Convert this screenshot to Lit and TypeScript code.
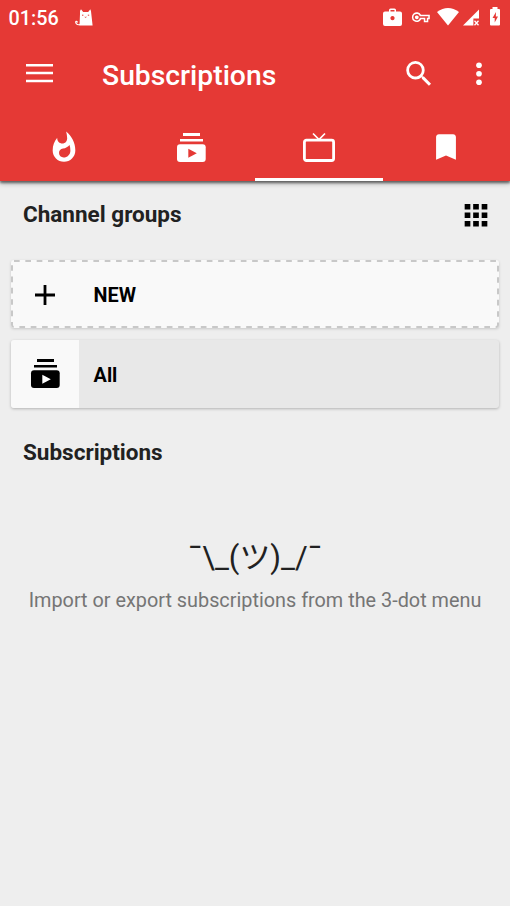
import { LitElement, html, svg, css } from "lit";
import { customElement } from "lit/decorators.js";

const stack = (hole: string) => svg`
  <path d="M6 0h17v3H6zM3 6h23v2.6H3z" fill="currentColor"/>
  <rect x="0" y="11.3" width="28.7" height="17.7" rx="3" fill="currentColor"/>
  <path d="M11.3 15.7v9L19.8 20.2z" fill=${hole}/>`;

@customElement("app-root")
export class AppRoot extends LitElement {
  static styles = css`
    :host { display: block; height: 906px; overflow: hidden; background: #eee; font-family: Roboto, "Noto Sans CJK JP", sans-serif; color: #212121; }
    * { box-sizing: border-box; }
    svg { display: block; flex: none; overflow: visible; }
    .top { background: #e53935; color: #fff; height: 181px; box-shadow: 0 2px 2px rgba(0,0,0,.4), 0 2px 5px rgba(0,0,0,.4); position: relative; }
    .status { height: 34px; display: flex; align-items: center; padding-left: 8.5px; }
    .clock { font-size: 19.8px; font-weight: 500; line-height: 34px; width: 66.5px; padding-top: 3px; white-space: nowrap; }
    .tray { margin-left: auto; }
    .bar { height: 79px; display: flex; align-items: center; padding: 0 14px 0 26px; }
    .title { font-size: 28.3px; font-weight: 500; line-height: 34px; margin: 4px 0 0 49px; flex: 1; white-space: nowrap; }
    .more { margin-left: 26px; }
    .tabs { display: grid; grid-template-columns: repeat(4, 1fr); height: 68px; }
    .tab { display: flex; align-items: center; justify-content: center; }
    .on { border-bottom: 3px solid #fff; padding-top: 3px; }
    .head { display: flex; align-items: center; justify-content: space-between; height: 68px; padding: 0 17px 0 23px; font-size: 22.5px; font-weight: 700; }
    .first span { padding-bottom: 2px; }
    .card { margin: 0 11px; height: 68px; display: flex; align-items: center; border-radius: 3px; box-shadow: 0 1px 3px rgba(0,0,0,.25); font-size: 19.8px; font-weight: 700; color: #000; overflow: hidden; }
    .card span { padding-top: 2px; }
    .new { margin-top: 11px; background: #f9f9f9; position: relative; overflow: visible; box-shadow: 0 1px 3px rgba(0,0,0,.16); }
    .dash { position: absolute; inset: 0; }
    .all { margin-top: 12px; background: #e8e8e8; }
    .icon { width: 68px; height: 68px; display: flex; align-items: center; justify-content: center; background: #f9f9f9; margin-right: 14.6px; }
    .all .icon { padding-bottom: 1px; }
    .new .icon { background: none; padding-top: 1px; }
    .second { margin-top: 10px; }
    .face { text-align: center; font-size: 30.9px; line-height: 46px; margin-top: 49px; white-space: nowrap; }
    .hint { text-align: center; font-size: 19.83px; line-height: 26px; margin-top: 7px; color: #757575; white-space: nowrap; }
  `;

  render() {
    return html`
      <div class="top">
        <div class="status">
          <span class="clock">01:56</span>
          <svg width="18" height="17" viewBox="0 0 18 17">
            <path d="M5 2 6 .2 8.2 3h5L15.3.3l.7 2 1.6 14.2H4.5L5 5z" fill="#fff"/>
            <path d="M5 15.6C1.5 16.5-.2 13 1.2 12.4q1.4-.2.9 1.2" fill="none" stroke="#fff" stroke-width="1.2"/>
            <path d="M7 6.2h1.4M12.8 6.2h1.4M9.8 8q.8.7 1.6 0" stroke="#e53935" fill="none"/>
          </svg>
          <svg class="tray" width="127" height="34" viewBox="383 0 127 34" fill="#fff">
            <path fill-rule="evenodd" d="M385 11.5h4V10q0-1.5 1.5-1.5h4q1.5 0 1.5 1.5v1.5h4q2 0 2 2V24q0 2-2 2h-15q-2 0-2-2V13.5q0-2 2-2zM390.5 11.5h4V10h-4zM392.5 16a2.1 2.1 0 1 0 .01 0z"/>
            <path fill-rule="evenodd" d="M421 14.7h8.8v4.6h-1.5v3h-4.5v-3h-2.6a4.9 4.9 0 1 1-.2-4.6zm-1.2 1.5a3.3 3.3 0 1 0 .1 1.6h5.4v3h1.5v-3h1.5v-1.6zM416.8 15.4a1.9 1.9 0 1 0 .01 0z"/>
            <path d="M437 12q11-8 22 0L448 25.5z"/>
            <path d="M463 25.5 479 9.5v9h-5.6v7z"/>
            <path d="m474.5 20.7 4 4.6m0-4.6-4 4.6" stroke="#fff" stroke-width="1.3"/>
            <path d="M490 10q0-1 1-1h1.5V7h5v2h1.5q1 0 1 1v14.5q0 1-1 1h-8q-1 0-1-1z"/>
            <path d="m496 12-3.500 6h2.200v4.600l3.300-6h-2.200z" fill="#e53935"/>
          </svg>
        </div>
        <div class="bar">
          <svg width="27" height="19" viewBox="0 .5 27 19" fill="#fff"><path d="M0 .5h27v2.5H0zM0 8.3h27v2.5H0zM0 16.2h27v2.5H0z"/></svg>
          <span class="title">Subscriptions</span>
          <svg width="34" height="34" viewBox="0 .2 24 24" fill="#fff"><path d="M15.5 14h-.79l-.28-.27A6.471 6.471 0 0 0 16 9.5 6.5 6.5 0 1 0 9.5 16c1.61 0 3.09-.59 4.23-1.57l.27.28v.79l5 4.99L20.49 19l-4.99-5zm-6 0C7.01 14 5 11.99 5 9.5S7.01 5 9.5 5 14 7.01 14 9.5 11.99 14 9.5 14z"/></svg>
          <svg class="more" width="34" height="34" viewBox="0 .2 24 24" fill="#fff"><circle cx="12" cy="6" r="2"/><circle cx="12" cy="12" r="2"/><circle cx="12" cy="18" r="2"/></svg>
        </div>
        <div class="tabs">
          <div class="tab"><svg width="34" height="34" viewBox="0 -.4 24 24" fill="#fff"><path d="M13.5.67s.74 2.65.74 4.8c0 2.06-1.35 3.73-3.41 3.73-2.07 0-3.63-1.67-3.63-3.73l.03-.36C5.21 7.51 4 10.62 4 14c0 4.42 3.58 8 8 8s8-3.58 8-8C20 8.61 17.41 3.8 13.5.67zM11.71 19c-1.78 0-3.22-1.4-3.22-3.14 0-1.62 1.05-2.76 2.81-3.12 1.77-.36 3.6-1.21 4.62-2.58.39 1.29.59 2.65.59 4.04 0 2.65-2.15 4.8-4.8 4.8z"/></svg></div>
          <div class="tab"><svg width="29" height="29" viewBox="0 0 29 29">${stack("#e53935")}</svg></div>
          <div class="tab on"><svg width="32" height="29" viewBox="0 0 32 29" fill="none" stroke="#fff"><rect x="1.4" y="7.2" width="29.2" height="20.3" rx="2" stroke-width="2.8"/><path d="m10 .5 6 6 6-6" stroke-width="1.7"/></svg></div>
          <div class="tab"><svg width="34" height="34" viewBox="0 0 24 24" fill="#fff"><path d="M17 3H7c-1.1 0-2 .9-2 2v16l7-3 7 3V5c0-1.1-.9-2-2-2z"/></svg></div>
        </div>
      </div>
      <div class="head first"><span>Channel groups</span>
        <svg width="34" height="34" viewBox="0 -.2 24 24"><path d="M4 8h4V4H4zm6 12h4v-4h-4zm-6 0h4v-4H4zm0-6h4v-4H4zm6 0h4v-4h-4zm6-10v4h4V4zm-6 4h4V4h-4zm6 6h4v-4h-4zm0 6h4v-4h-4z"/></svg>
      </div>
      <div class="card new">
        <svg class="dash" width="488" height="68"><rect x="1" y="1" width="486" height="66" rx="2" fill="none" stroke="#c8c8c8" stroke-width="2" stroke-dasharray="5.67 5.67"/></svg>
        <div class="icon"><svg width="20" height="20" viewBox="0 0 20 20"><path d="M8.6 0h2.8v8.6H20v2.8h-8.6V20H8.6v-8.6H0V8.6h8.6z"/></svg></div>
        <span>NEW</span>
      </div>
      <div class="card all">
        <div class="icon"><svg width="29" height="29" viewBox="0 0 29 29">${stack("#fff")}</svg></div>
        <span>All</span>
      </div>
      <div class="head second"><span>Subscriptions</span></div>
      <div class="face">¯\\_(ツ)_/¯</div>
      <div class="hint">Import or export subscriptions from the 3-dot menu</div>
    `;
  }
}
